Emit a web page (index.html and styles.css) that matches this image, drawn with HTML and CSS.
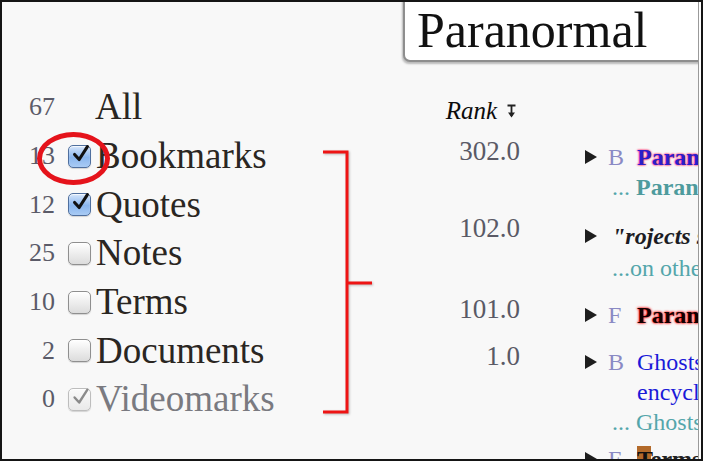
FILE: index.html
```html
<!DOCTYPE html>
<html>
<head>
<meta charset="utf-8">
<link rel="stylesheet" href="styles.css">
</head>
<body>
<div class="frame">
  <div class="page">
    <div class="top">
      <div class="search">Paranormal</div>
    </div>
    <div class="main">
      <div class="facets">
        <div class="facet"><span class="count">67</span><span class="label label-all">All</span></div>
        <div class="facet"><span class="count">13</span><span class="cb cb-on"><svg viewBox="0 0 24 24"><path d="M5 12.5 L10 18 L19 4" /></svg></span><span class="label">Bookmarks</span></div>
        <div class="facet"><span class="count">12</span><span class="cb cb-on"><svg viewBox="0 0 24 24"><path d="M5 12.5 L10 18 L19 4" /></svg></span><span class="label">Quotes</span></div>
        <div class="facet"><span class="count">25</span><span class="cb"></span><span class="label">Notes</span></div>
        <div class="facet"><span class="count">10</span><span class="cb"></span><span class="label">Terms</span></div>
        <div class="facet"><span class="count">2</span><span class="cb"></span><span class="label">Documents</span></div>
        <div class="facet"><span class="count">0</span><span class="cb cb-dis"><svg viewBox="0 0 24 24"><path d="M5 12.5 L10 18 L19 4" /></svg></span><span class="label label-dis">Videomarks</span></div>
      </div>
      <div class="results">
        <div class="rhead">
          <div class="rank-h">Rank <svg class="sort" viewBox="0 0 9 14"><path d="M0.5 1.5 H8.5 M4.5 1.5 V12" /><path class="head" d="M1 8.5 L4.5 13.5 L8 8.5 Z" /></svg></div>
        </div>
        <div class="row">
          <div class="rank">302.0</div>
          <div class="tri"><svg viewBox="0 0 12 14"><path d="M0 0 L12 7 L0 14 Z" /></svg></div>
          <div class="body">
            <div class="head"><span class="type">B</span><span class="title hl-blue">Paranormal - Wikipedia, the free encyclopedia</span></div>
            <div class="snip">... <b>Paranormal</b> is a general term</div>
          </div>
        </div>
        <div class="row row-q">
          <div class="rank">102.0</div>
          <div class="tri"><svg viewBox="0 0 12 14"><path d="M0 0 L12 7 L0 14 Z" /></svg></div>
          <div class="body">
            <div class="head"><span class="title quote">"rojects such as this one</span></div>
            <div class="snip">...on other paranormal topics</div>
          </div>
        </div>
        <div class="row">
          <div class="rank">101.0</div>
          <div class="tri"><svg viewBox="0 0 12 14"><path d="M0 0 L12 7 L0 14 Z" /></svg></div>
          <div class="body">
            <div class="head"><span class="type">F</span><span class="title hl-red">Paranormal</span></div>
          </div>
        </div>
        <div class="row row-tight">
          <div class="rank">1.0</div>
          <div class="tri"><svg viewBox="0 0 12 14"><path d="M0 0 L12 7 L0 14 Z" /></svg></div>
          <div class="body">
            <div class="head"><span class="type">B</span><span class="title plain">Ghosts&nbsp;and&nbsp;spirits encyclopedia</span></div>
            <div class="snip">... Ghosts are said to be</div>
          </div>
        </div>
        <div class="row">
          <div class="rank"></div>
          <div class="tri"><svg viewBox="0 0 12 14"><path d="M0 0 L12 7 L0 14 Z" /></svg></div>
          <div class="body">
            <div class="head"><span class="type">F</span><span class="title"><span class="tbox">T</span>erms</span></div>
          </div>
        </div>
      </div>
    </div>
    <div class="circle"></div>
    <svg class="bracket" viewBox="0 0 58 272" width="58" height="272">
      <path d="M5 6 H29 V266 H5 M29 137 H54" />
    </svg>
  </div>
</div>
</body>
</html>
```

FILE: styles.css
```css
html, body {
  margin: 0;
  padding: 0;
  background: #f8f8f8;
}

.frame {
  box-sizing: border-box;
  width: 703px;
  height: 461px;
  border: 2px solid #151515;
  background: #fdfdfd;
  overflow: hidden;
}

.page {
  position: relative;
  width: 696px;
  height: 457px;
  border-right: 1px solid #9a9a9a;
  background: #f8f8f8;
  overflow: hidden;
  font-family: "Liberation Serif", "Times New Roman", serif;
  color: #222;
}

.top {
  height: 93px;
}

.search {
  box-sizing: border-box;
  margin-top: -12px;
  margin-left: 401px;
  width: 320px;
  height: 72px;
  padding: 11px 0 3px 12px;
  background: #fff;
  border: 2px solid #8e8e8e;
  border-radius: 0 0 0 7px;
  box-shadow: -1px 2px 2px rgba(0, 0, 0, 0.25);
  font-size: 50px;
  line-height: 55px;
  color: #111;
  white-space: nowrap;
}

.main {
  display: flex;
}

.facets {
  width: 300px;
  flex: none;
}

.facet {
  display: flex;
  align-items: center;
  height: 48.7px;
}

.count {
  width: 53px;
  text-align: right;
  font-size: 26px;
  color: #5b5b68;
}

.cb {
  box-sizing: border-box;
  width: 23px;
  height: 23px;
  margin-left: 13px;
  border: 1px solid #8f8f8f;
  border-radius: 5px;
  background: linear-gradient(#ffffff, #dcdcdc);
  box-shadow: inset 0 1px 1px rgba(255, 255, 255, 0.8), 0 1px 1px rgba(0, 0, 0, 0.15);
  position: relative;
}

.cb svg {
  width: 22px;
  height: 22px;
  position: absolute;
  left: 1px;
  top: -3px;
}

.cb svg path {
  fill: none;
  stroke: #111;
  stroke-width: 3.4;
  stroke-linecap: round;
  stroke-linejoin: round;
}

.cb-on {
  border-color: #4f6f9e;
  background: linear-gradient(#d6e6fb, #8ab6ee 55%, #a9cbf4);
}

.cb-dis {
  border-color: #bdbdbd;
  background: linear-gradient(#fafafa, #e9e9e9);
}

.cb-dis svg path {
  stroke: #8a8a8a;
  stroke-width: 2.6;
}

.label {
  margin-left: 5px;
  font-size: 37px;
  line-height: 40px;
  color: #2a2622;
}

.label-all {
  margin-left: 40px;
}

.label-dis {
  color: #7a7a80;
}

.results {
  flex: 1;
  min-width: 0;
  overflow: hidden;
}

.rhead {
  height: 56px;
  box-sizing: border-box;
  padding-top: 15px;
  width: 218px;
}

.rank-h {
  padding-right: 4px;
  font-style: italic;
  font-size: 25px;
  line-height: 26px;
  color: #0c0c0c;
  display: flex;
  justify-content: flex-end;
  align-items: center;
  gap: 10px;
}

.sort {
  width: 9px;
  height: 14px;
}

.sort path {
  fill: none;
  stroke: #222;
  stroke-width: 1.8;
}

.sort path.head {
  fill: #222;
  stroke: none;
}

.row {
  display: flex;
  padding-top: 3px;
  margin-bottom: 14px;
}

.row-tight {
  margin-bottom: 4px;
}

.rank {
  width: 218px;
  flex: none;
  text-align: right;
  font-size: 27px;
  line-height: 18px;
  color: #5a5a66;
}

.tri {
  margin-left: 65px;
  width: 23px;
  height: 30px;
  flex: none;
  display: flex;
  align-items: center;
}

.tri svg {
  width: 12px;
  height: 14px;
  fill: #1e1e1e;
}

.body {
  flex: 1;
  min-width: 0;
  font-size: 24px;
  line-height: 30px;
  white-space: nowrap;
}

.head {
  display: flex;
}

.type {
  width: 29px;
  flex: none;
  color: #8a8ac4;
}

.title {
  font-weight: bold;
}

.hl-blue {
  color: #2a1ecb;
  text-shadow: 0 0 2px #ff2a6a, 0 0 2px #ff2a6a;
}

.hl-red {
  color: #120000;
  text-shadow: 0 0 2px #ff1010, 0 0 3px #ff1010;
}

.quote {
  font-style: italic;
  padding-left: 4px;
  color: #1c1c24;
}

.row-q .tri {
  height: 34px;
}

.row-q .head {
  line-height: 34px;
}

.plain {
  font-weight: normal;
  color: #1a1ad8;
  white-space: normal;
  width: 60px;
}

.snip {
  padding-left: 4px;
  color: #54a6ab;
}

.snip b {
  color: #4e9b9d;
}

.tbox {
  background: #b36a2a;
  color: #111;
}

.circle {
  position: absolute;
  left: 35px;
  top: 130px;
  width: 73px;
  height: 53px;
  box-sizing: border-box;
  border: 5px solid #e5131b;
  border-radius: 50%;
}

.bracket {
  position: absolute;
  left: 316px;
  top: 144px;
  overflow: visible;
  filter: drop-shadow(1px 1px 1px rgba(0, 0, 0, 0.25));
}

.bracket path {
  fill: none;
  stroke: #ee1414;
  stroke-width: 3;
}
```
